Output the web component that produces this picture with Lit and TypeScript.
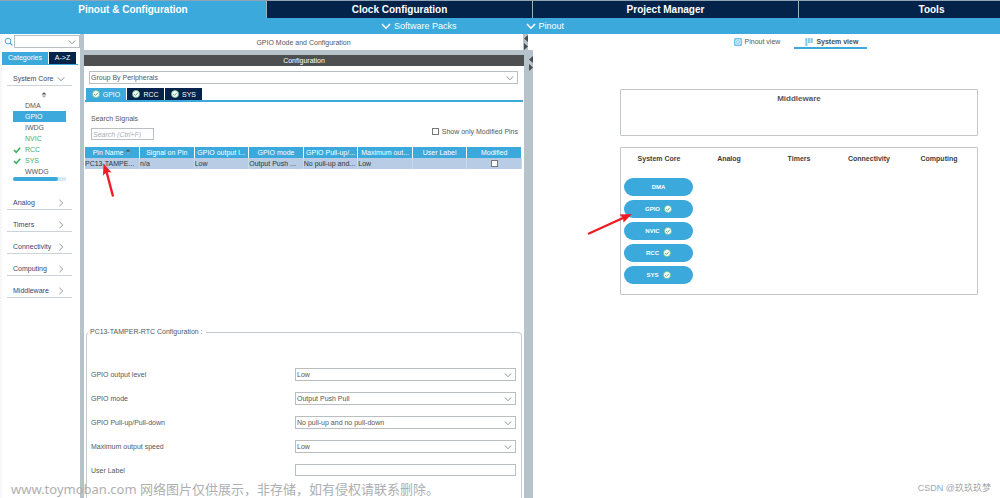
import { LitElement, html, css, svg, nothing } from "lit";
import { customElement, property, state } from "lit/decorators.js";
import { classMap } from "lit/directives/class-map.js";

const okBadge = html`<svg class="ok" viewBox="0 0 16 16" width="8" height="8" aria-hidden="true">
  <circle cx="8" cy="8" r="7" fill="#fff" stroke="#6cc18c" stroke-width="1.6"></circle>
  <path d="M4.5 8.2 7 10.8 11.6 5.6" fill="none" stroke="#4bb070" stroke-width="2"></path>
</svg>`;

const chevron = (dir: "down" | "right", size: number, color: string, stroke = 1) => html`<svg
  class="chev" viewBox="0 0 10 10" width=${size} height=${size} aria-hidden="true">
  ${dir === "down"
    ? svg`<path d="M1 3 5 7.2 9 3" fill="none" stroke=${color} stroke-width=${stroke}></path>`
    : svg`<path d="M3 1 7.2 5 3 9" fill="none" stroke=${color} stroke-width=${stroke}></path>`}
</svg>`;

const railArrows = html`<svg viewBox="0 0 4 16" width="4" height="16" aria-hidden="true">
  <path d="M4 1V8L0 4.5Z M0 9V16L4 12.5Z" fill="#4a4d50"></path>
</svg>`;

@customElement("combo-box")
class ComboBox extends LitElement {
  @property() value = "";
  @property() label = "";

  static styles = css`
    :host { display: block; }
    .box { display: grid; grid-template-columns: 1fr 11px; align-items: center; border: 1px solid #b9bec2; background: #fff; height: 11px; }
    select {
      grid-area: 1 / 1 / 2 / 3; appearance: none; border: 0; outline: 0; background: none; margin: 0; padding: 0 11px 0 1px;
      width: 100%; min-width: 0; height: 11px; font: 7px/11px "Liberation Sans", Arial, sans-serif; color: #55585c;
    }
    svg { grid-area: 1 / 2; pointer-events: none; }
  `;

  render() {
    return html`<div class="box">
      <select aria-label=${this.label}><option>${this.value}</option></select>
      ${chevron("down", 8, "#777b7e")}
    </div>`;
  }
}

@customElement("side-panel")
class SidePanel extends LitElement {
  @state() private selected = "GPIO";

  private items = [
    { name: "DMA" }, { name: "GPIO" }, { name: "IWDG" },
    { name: "NVIC", on: true },
    { name: "RCC", on: true, tick: true },
    { name: "SYS", on: true, tick: true },
    { name: "WWDG" },
  ];

  static styles = css`
    :host { display: block; box-sizing: border-box; border-left: 2px solid #f7f8f8; font: 7px/11px "Liberation Sans", Arial, sans-serif; }
    button { border: 0; margin: 0; padding: 0; font: inherit; background: none; text-align: left; }
    ul { list-style: none; margin: 0; padding: 0; }
    .search { display: flex; align-items: center; gap: 1px; padding: 1px 0 0 2px; }
    .search combo-box { flex: 1; }
    .tabs { display: flex; gap: 1px; margin: 4px 2px 0 0; border-bottom: 1px solid #3ba9db; }
    .tabs button { height: 12px; line-height: 12px; text-align: center; background: #03234b; color: #fff; flex: 0 0 27px; }
    .tabs .on { background: #3ba9db; flex-basis: 46px; }
    .group { display: flex; align-items: center; justify-content: space-between; width: 65px; height: 14px; margin-left: 5px; padding: 0 7px 0 6px; box-sizing: border-box; border-bottom: 1px solid #cdd3d8; color: #39456f; }
    .core { margin-top: 7px; }
    .updown { display: block; margin: 6px 0 2px 39px; }
    .item { display: grid; grid-template-columns: 12px 1fr; align-items: center; width: 53px; height: 11px; margin-left: 11px; color: #55585c; }
    .item.on { color: #45b06c; }
    .item.selected { background: #3ba9db; color: #fff; }
    .item span { grid-column: 2; }
    .item svg { grid-area: 1 / 1; }
    .track { width: 53px; height: 4px; margin: 0 0 15px 11px; border-radius: 2px 0 0 2px; background: #d5eafa; }
    .thumb { width: 45px; height: 4px; border-radius: 2px; background: #3ba9db; }
    .rest { display: flex; flex-direction: column; gap: 8px; }
  `;

  render() {
    return html`
      <div class="search">
        <svg viewBox="0 0 10 10" width="9" height="9" aria-hidden="true">
          <circle cx="4.5" cy="4.5" r="3.2" fill="none" stroke="#3ba9db" stroke-width="1.1"></circle>
          <path d="M6.8 6.8 9.3 9.4" stroke="#3ba9db" stroke-width="1.3"></path>
        </svg>
        <combo-box label="Search"></combo-box>
      </div>
      <div class="tabs"><button class="on">Categories</button><button>A-&gt;Z</button></div>
      <button class="group core">System Core ${chevron("down", 8, "#6b7075")}</button>
      <svg class="updown" viewBox="0 0 6 6" width="6" height="6" aria-hidden="true">
        <path d="M0.5 2.6 3 0.2 5.5 2.6Z" fill="#555"></path><path d="M0.5 3.6H5.5L3 5.8Z" fill="#aaa"></path>
      </svg>
      <ul>
        ${this.items.map((i) => html`<li><button
          class=${classMap({ item: true, on: !!i.on, selected: i.name === this.selected })}
          @click=${() => (this.selected = i.name)}>
            ${i.tick ? html`<svg viewBox="0 0 8 8" width="8" height="8" aria-hidden="true"><path d="M1 4 3.2 6.3 7.2 1.8" fill="none" stroke="#3fae68" stroke-width="1.7"></path></svg>` : nothing}
            <span>${i.name}</span>
          </button></li>`)}
      </ul>
      <div class="track"><div class="thumb"></div></div>
      <div class="rest">
        ${["Analog", "Timers", "Connectivity", "Computing", "Middleware"].map(
          (g) => html`<button class="group">${g} ${chevron("right", 8, "#7a7f84")}</button>`)}
      </div>`;
  }
}

@customElement("config-panel")
class ConfigPanel extends LitElement {
  private heads = ["Pin Name", "Signal on Pin", "GPIO output l...", "GPIO mode", "GPIO Pull-up/...", "Maximum out...", "User Label", "Modified"];
  private row = ["PC13-TAMPE...", "n/a", "Low", "Output Push ...", "No pull-up and...", "Low", ""];
  private fields = [
    ["GPIO output level", "Low"],
    ["GPIO mode", "Output Push Pull"],
    ["GPIO Pull-up/Pull-down", "No pull-up and no pull-down"],
    ["Maximum output speed", "Low"],
  ];

  static styles = css`
    :host { display: flex; flex-direction: column; min-width: 0; background: #b7c3ca; font: 7px/11px "Liberation Sans", Arial, sans-serif; color: #55585c; }
    .top { display: flex; height: 16px; margin-bottom: 5px; }
    .title { flex: 1; background: #fff; text-align: center; line-height: 17px; }
    .rail { width: 5px; }
    .blank { width: 5px; background: #fff; }
    .lower { flex: 1; display: flex; min-height: 0; }
    .content { flex: 1; min-width: 0; background: #fff; position: relative; }
    .lower .rail { width: 9px; text-align: right; }
    .rail svg { display: block; margin-left: auto; }
    .bar { height: 11px; background: #4d4f50; color: #fff; text-align: center; }
    .pick { margin: 5px 6px 4px 5px; }
    .tabs { display: flex; gap: 1px; padding-left: 1px; margin: 0 1px; border-bottom: 2px solid #3ba9db; }
    .tabs button { display: flex; align-items: center; justify-content: center; gap: 3px; width: 37px; height: 12px; border: 0; padding: 0; background: #03234b; color: #fff; font: inherit; }
    .tabs .on { width: 40px; background: #3ba9db; }
    .filter { display: flex; justify-content: space-between; align-items: flex-end; padding: 11px 6px 7px 7px; }
    .find { display: flex; flex-direction: column; gap: 4px; }
    .find input { box-sizing: border-box; width: 63px; height: 12px; border: 1px solid #b9bec2; padding: 0 1px; font: inherit; outline: 0; }
    .find input::placeholder { color: #a9adb0; font-style: italic; }
    .only { display: flex; align-items: center; gap: 3px; margin-bottom: 3px; }
    input[type="checkbox"] { appearance: none; width: 7px; height: 7px; margin: 0; box-sizing: border-box; border: 1px solid #777; background: #fff; }
    .pins { min-height: 180px; margin: 0 2px 0 1px; }
    table { width: 100%; table-layout: fixed; border-collapse: collapse; }
    th, td { height: 11px; padding: 0; line-height: 11px; white-space: nowrap; overflow: hidden; text-align: center; font-weight: 400; }
    th { background: #3ba9db; color: #fff; border-right: 1px solid #fff; }
    td { background: #b8cde5; color: #333; text-align: left; border-right: 1px solid #c9d9ec; }
    td.mid { text-align: center; }
    td input { display: block; }
    td.mid input { margin: 0 auto; }
    fieldset { margin: 0 2px 0 2px; min-width: 0; border: 1px solid #c3c9cd; border-radius: 4px; padding: 31px 5px 40px 4px; display: flex; flex-direction: column; gap: 11px; }
    legend { padding: 0 3px 0 2px; height: 10px; line-height: 10px; margin-left: -3px; }
    .field { display: grid; grid-template-columns: 48% 52%; align-items: center; }
    .field input { box-sizing: border-box; width: 100%; height: 12px; border: 1px solid #b9bec2; padding: 0 1px; font: inherit; }
    .arrow { position: absolute; left: 17px; top: 108px; }
  `;

  render() {
    return html`
      <div class="top"><div class="title">GPIO Mode and Configuration</div><div class="rail">${railArrows}</div><div class="blank"></div></div>
      <div class="lower">
        <div class="content">
          <div class="bar">Configuration</div>
          <combo-box class="pick" label="Grouping" value="Group By Peripherals"></combo-box>
          <div class="tabs">
            <button class="on">${okBadge}GPIO</button><button>${okBadge}RCC</button><button>${okBadge}SYS</button>
          </div>
          <div class="filter">
            <div class="find"><label for="find">Search Signals</label><input id="find" placeholder="Search (Ctrl+F)" /></div>
            <label class="only"><input type="checkbox" />Show only Modified Pins</label>
          </div>
          <div class="pins">
            <table>
              <thead><tr>${this.heads.map((h, n) => html`<th>${h}${n === 0
                ? html` <svg viewBox="0 0 6 6" width="6" height="6" aria-hidden="true"><path d="M0.5 2.6 3 0.2 5.5 2.6Z" fill="#555"></path><path d="M1 3.6H5L3 5.4Z" fill="#7fa9c0"></path></svg>`
                : nothing}</th>`)}</tr></thead>
              <tbody><tr>${this.row.map((c) => html`<td>${c}</td>`)}<td class="mid"><input type="checkbox" aria-label="Modified" /></td></tr></tbody>
            </table>
          </div>
          <fieldset>
            <legend>PC13-TAMPER-RTC Configuration :</legend>
            ${this.fields.map(([l, v]) => html`<div class="field"><span>${l}</span><combo-box label=${l} value=${v}></combo-box></div>`)}
            <div class="field"><label for="user">User Label</label><input id="user" /></div>
          </fieldset>
          <svg class="arrow" viewBox="0 0 14 34" width="14" height="34" aria-hidden="true">
            <path d="M11.8 32.5 5.6 9" stroke="#ee1c25" stroke-width="2.4" stroke-linecap="round"></path>
            <path d="M2.5 0.5 10.5 9.5 6 9 2 12.5Z" fill="#ee1c25"></path>
          </svg>
        </div>
        <div class="rail">${railArrows}</div>
      </div>`;
  }
}

@customElement("system-view")
class SystemView extends LitElement {
  static styles = css`
    :host { display: block; min-width: 0; background: #fff; font: 7px/11px "Liberation Sans", Arial, sans-serif; color: #55585c; }
    button { border: 0; margin: 0; padding: 0; font: inherit; background: none; color: inherit; }
    .views { display: flex; justify-content: center; gap: 14px; padding-left: 68px; }
    .views button { display: flex; align-items: center; gap: 3px; height: 15px; padding-top: 2px; box-sizing: border-box; border-bottom: 2px solid transparent; }
    .views .on { padding: 2px 9px 0 11px; border-bottom-color: #3ba9db; font-weight: 700; color: #4a4d50; }
    .board { position: relative; margin: 40px 22px 0 87px; display: flex; flex-direction: column; gap: 11px; }
    .box { border: 1px solid #c3c6c9; border-radius: 1px; text-align: center; font-weight: 700; }
    .mid { height: 42px; padding-top: 3px; font-size: 8px; }
    .grid { display: grid; grid-template-columns: repeat(5, 1fr); padding: 5px 3px 10px; color: #3e4042; }
    .stack { display: flex; flex-direction: column; gap: 4px; margin-top: 14px; }
    .pill { display: flex; align-items: center; justify-content: center; gap: 4px; height: 18px; border-radius: 9px; margin: 0 1px 0 0; background: #3ba9db; color: #fff; font: 700 6px/18px "Liberation Sans", Arial, sans-serif; }
    .arrow { position: absolute; left: -33px; top: 123px; }
  `;

  render() {
    return html`
      <div class="views">
        <button>
          <svg viewBox="0 0 8 8" width="8" height="8" aria-hidden="true"><rect width="8" height="8" rx="1.5" fill="#6dc0e6"></rect><rect x="2" y="2" width="4" height="4" fill="#3ba9db" stroke="#fff"></rect><path d="M3 3 5 5M5 3 3 5" stroke="#fff" stroke-width="0.7"></path></svg>
          Pinout view
        </button>
        <button class="on">
          <svg viewBox="0 0 8 8" width="8" height="8" aria-hidden="true"><path d="M0.3 0H2.4V8H0.3Z M3 0H4.9V5H3Z M5.5 0H7.7V5H5.5Z" fill="#86cbea"></path></svg>
          System view
        </button>
      </div>
      <div class="board">
        <div class="box mid">Middleware</div>
        <div class="box grid">
          ${["System Core", "Analog", "Timers", "Connectivity", "Computing"].map((c, n) => html`<div>${c}${n === 0
            ? html`<div class="stack">${["DMA", "GPIO", "NVIC", "RCC", "SYS"].map(
                (p, k) => html`<button class="pill">${p}${k ? okBadge : nothing}</button>`)}</div>`
            : nothing}</div>`)}
        </div>
        <svg class="arrow" viewBox="0 0 46 24" width="46" height="24" aria-hidden="true">
          <path d="M2 21.5 36 6" stroke="#ee1c25" stroke-width="2.4" stroke-linecap="round"></path>
          <path d="M45 2 36.5 10.5 36 6 32.5 2.5Z" fill="#ee1c25"></path>
        </svg>
      </div>`;
  }
}

@customElement("app-root")
class AppRoot extends LitElement {
  static styles = css`
    :host { display: flex; flex-direction: column; position: relative; height: 100vh; overflow: hidden; background: #fff; font-family: "Liberation Sans", Arial, sans-serif; color: #fff; }
    button { border: 0; margin: 0; padding: 0; color: #fff; background: none; }
    .main { display: grid; grid-template-columns: repeat(4, 26.6%); overflow: hidden; border-top: 1px solid #8fa3b5; flex: none; }
    .main button { height: 17px; font: 700 10px/17px "Liberation Sans", Arial, sans-serif; background: #03234b; border-left: 1px solid #9fb0bf; }
    .main .on { background: #3ba9db; border-left: 0; }
    .sub { display: flex; flex: none; gap: 69px; height: 16px; padding-left: 38.1%; background: #3ba9db; }
    .sub button { display: flex; align-items: center; gap: 3px; font: 9px/16px "Liberation Sans", Arial, sans-serif; }
    .body { flex: 1; display: flex; min-height: 0; }
    side-panel { flex: 0 0 80px; }
    .split { flex: 0 0 4px; background: #b7c3ca; }
    config-panel { flex: 449 1 0; }
    system-view { flex: 467 1 0; }
    .mark { position: absolute; left: 11px; bottom: 0; font: 13px/18px "Noto Sans", "Noto Sans CJK SC", sans-serif; color: #adb0b2; white-space: pre; }
    .credit { position: absolute; right: 9px; bottom: 4px; font: 9px/12px "Liberation Sans", "Noto Sans CJK SC", sans-serif; color: #a3a5a7; }
  `;

  render() {
    return html`
      <nav class="main">
        <button class="on">Pinout &amp; Configuration</button><button>Clock Configuration</button><button>Project Manager</button><button>Tools</button>
      </nav>
      <div class="sub">
        <button>${chevron("down", 10, "#fff", 1.6)}Software Packs</button>
        <button>${chevron("down", 10, "#fff", 1.6)}Pinout</button>
      </div>
      <div class="body">
        <side-panel></side-panel>
        <div class="split"></div>
        <config-panel></config-panel>
        <system-view></system-view>
      </div>
      <div class="mark">www.toymoban.com 网络图片仅供展示，非存储，如有侵权请联系删除。</div>
      <div class="credit">CSDN @玖玖玖梦</div>`;
  }
}
